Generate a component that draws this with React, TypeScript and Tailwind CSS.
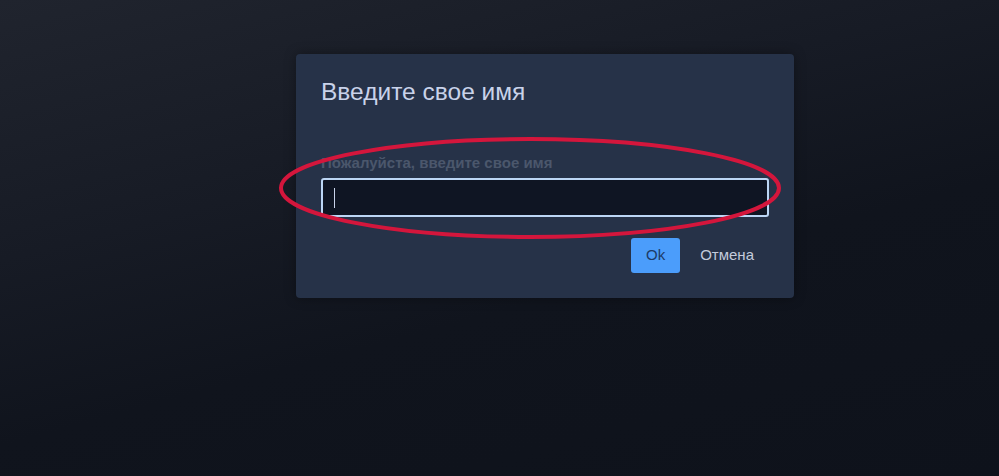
import React from "react";

export default function App() {
  return (
    <div
      className="relative w-[999px] h-[476px] overflow-hidden bg-[linear-gradient(165deg,#20242e_0%,#171b25_35%,#10141d_60%,#0e121b_100%)] pt-[54px] pl-[296px]"
      style={{ fontFamily: '"Liberation Sans", Arial, sans-serif' }}
    >
      <div className="w-[498px] h-[244px] rounded-[4px] bg-[#263248] px-[25px] pt-[24px] pb-[25px] flex flex-col shadow-[0_0_12px_rgba(0,0,0,0.35)]">
        <h2 className="text-[24.5px] leading-[28px] text-[#c9d3ea] font-normal">Введите свое имя</h2>
        <label className="mt-[48px] text-[15px] leading-[18px] font-bold text-[#4b576c]">
          Пожалуйста, введите свое имя
        </label>
        <div className="mt-[6px] h-[39px] w-[448px] rounded-[3px] border-2 border-[#bcd6f5] bg-[#0f1523] flex items-center pl-[11px]">
          <span className="block w-[1px] h-[20px] bg-[#c9d3ea]" />
        </div>
        <div className="mt-[21px] flex justify-end gap-[6px]">
          <button className="h-[35px] px-[15px] rounded-[3px] bg-[#4b9dfb] text-[15px] text-[#1c3a66]">Ok</button>
          <button className="h-[35px] pl-[14px] pr-[15px] rounded-[3px] text-[15px] text-[#c3cbdc]">Отмена</button>
        </div>
      </div>
      <svg
        className="absolute left-[276px] top-[134px] pointer-events-none"
        width="510"
        height="108"
        viewBox="0 0 510 108"
      >
        <ellipse cx="254" cy="54" rx="249" ry="49" fill="none" stroke="#d4163c" strokeWidth="4" />
      </svg>
    </div>
  );
}
